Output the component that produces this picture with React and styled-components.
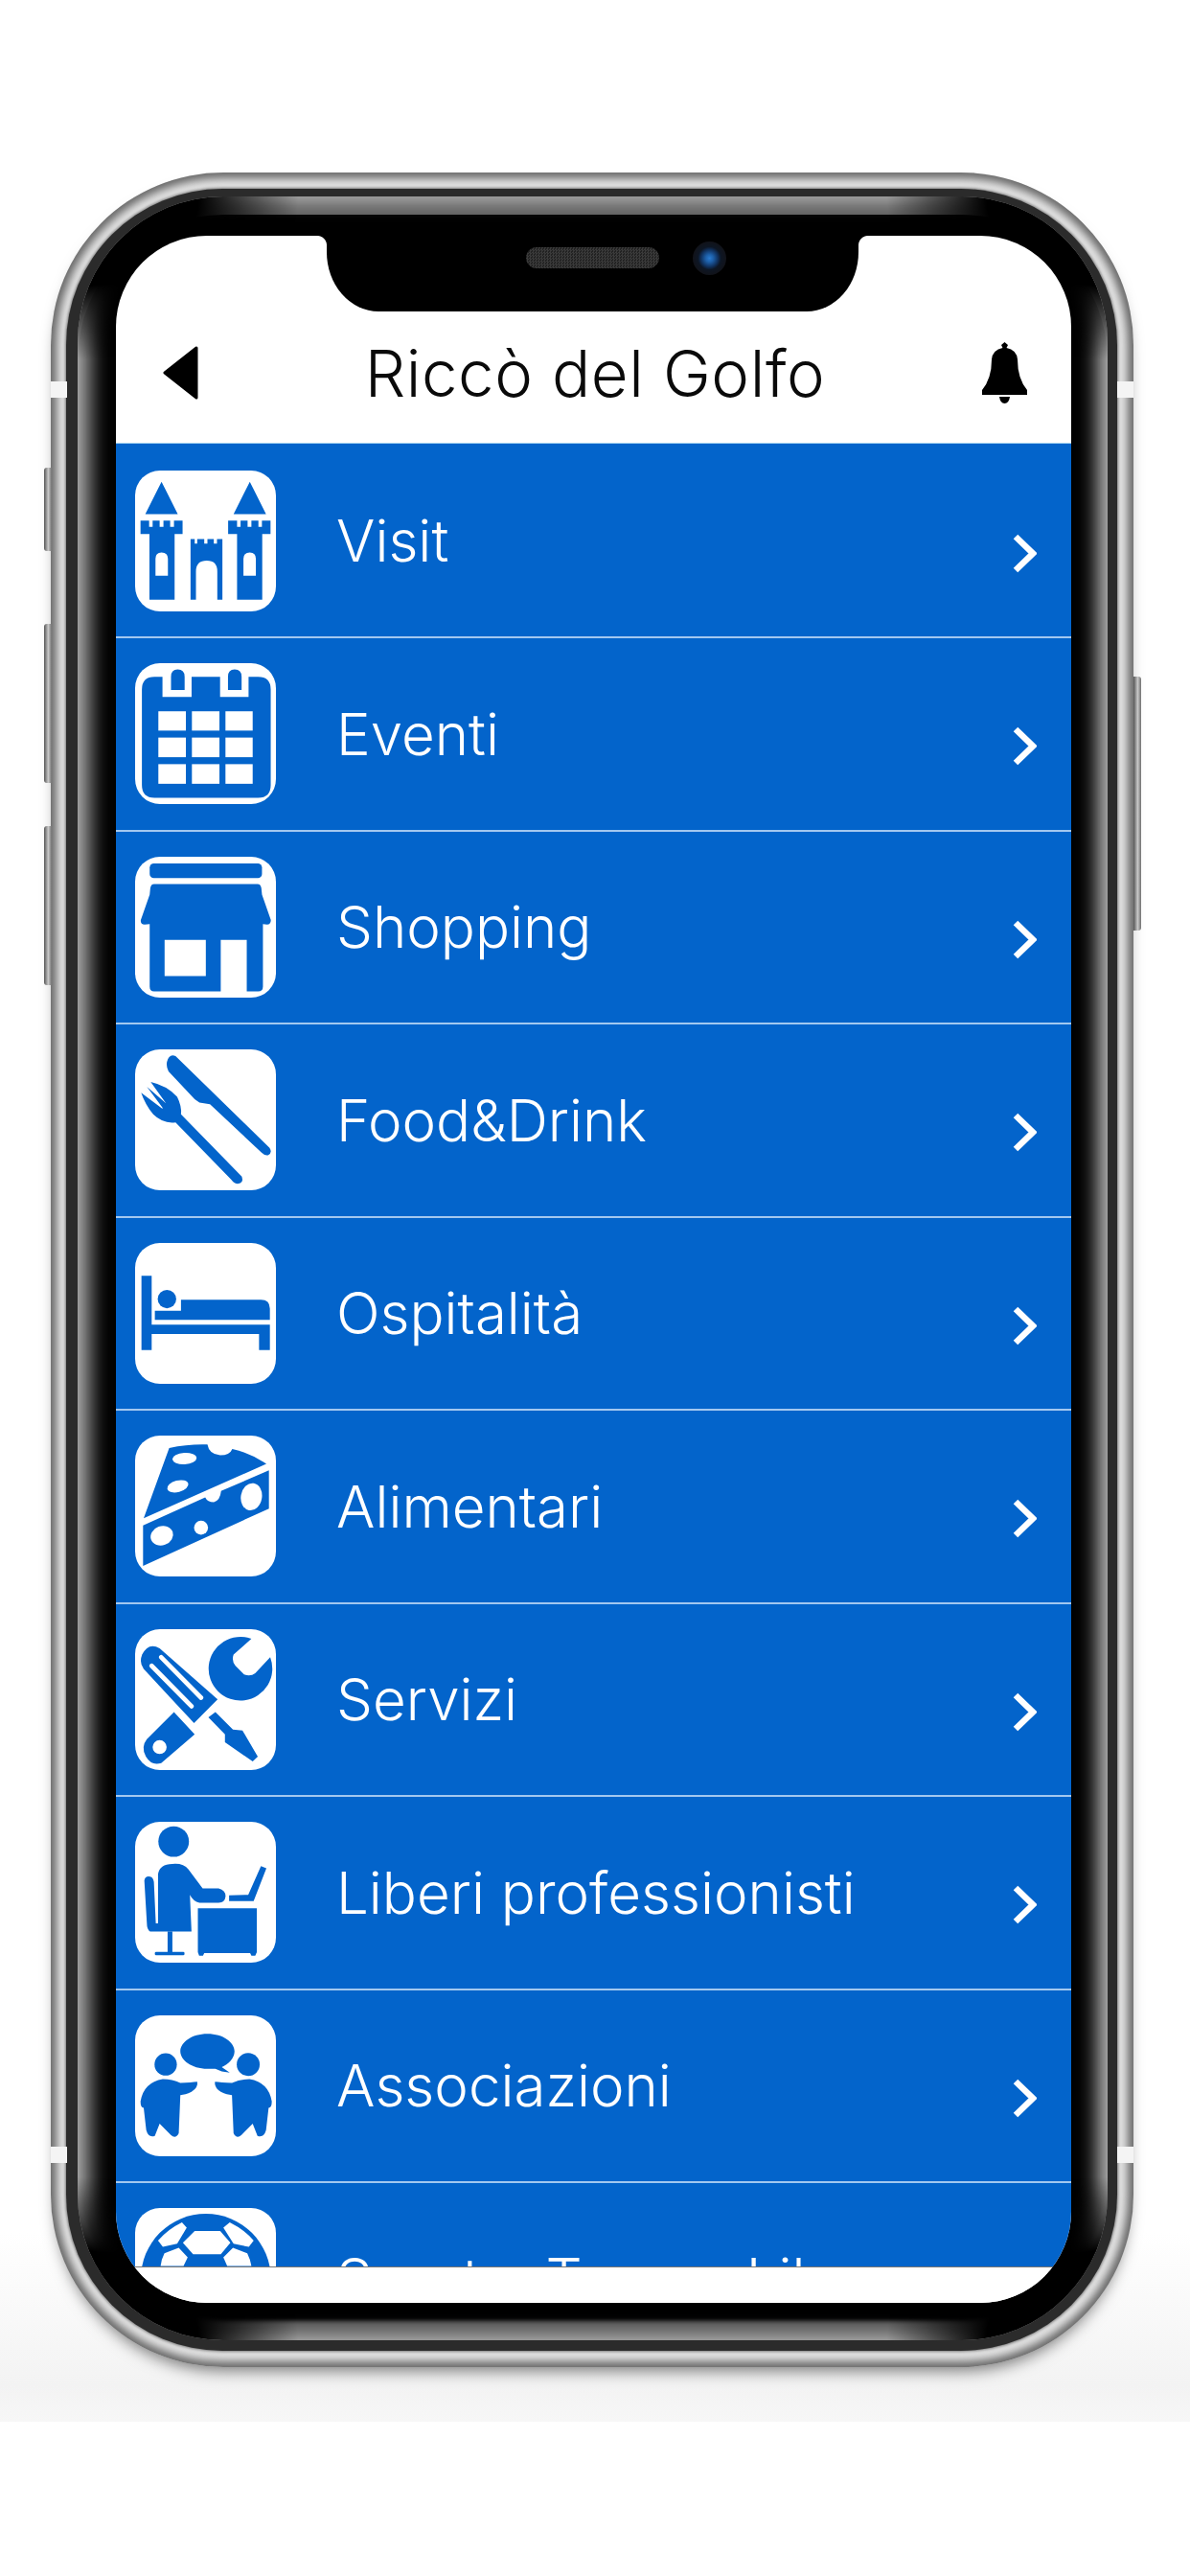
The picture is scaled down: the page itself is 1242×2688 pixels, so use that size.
import React from 'react'
import styled, { createGlobalStyle } from 'styled-components'

const BLUE = '#0364cb'

const GlobalStyle = createGlobalStyle`
  html, body {
    margin: 0;
    background: #fff;
  }
`

const Page = styled.div`
  width: 1242px;
  height: 2688px;
  background: #fff;
`

const Stage = styled.div`
  height: 2527px;
  box-sizing: border-box;
  padding: 180px 0 0 53px;
  overflow: hidden;
  background: linear-gradient(to bottom, #fff 2330px, #f3f3f3 2490px, #f7f7f7 2527px);
`

const Phone = styled.div`
  position: relative;
  width: 1130px;
  height: 2290px;
  box-sizing: border-box;
  padding: 17px 17px 17px 16px;
  border-radius: 180px;
  background: #e2e2e2;
  box-shadow:
    inset 0 0 9px 6px #6a6a6a,
    0 10px 16px -6px rgba(0, 0, 0, 0.5);
`

const SideKey = styled.div`
  position: absolute;
  top: ${p => p.$top}px;
  height: ${p => p.$height}px;
  width: 8px;
  ${p => (p.$right ? 'right: -8px;' : 'left: -7px;')}
  border-radius: ${p => (p.$right ? '0 3px 3px 0' : '3px 0 0 3px')};
  background: linear-gradient(to right, #555, #c9c9c9 55%, #707070);
`

const AntennaBand = styled.div`
  position: absolute;
  top: ${p => p.$top}px;
  ${p => (p.$right ? 'right: 0;' : 'left: 0;')}
  width: 17px;
  height: 17px;
  background: #f4f4f4;
`

const InnerRing = styled.div`
  height: 100%;
  box-sizing: border-box;
  padding: 8px 10px 11px 12px;
  border-radius: 163px;
  background: #2b2b2b;
  box-shadow: 0 0 3px 1px #777;
`

const Bezel = styled.div`
  position: relative;
  height: 100%;
  box-sizing: border-box;
  padding: 41px 38px 39px 40px;
  border-radius: 152px;
  background: #000;
  box-shadow:
    inset 12px 0 22px 0 #b0b0b0,
    inset -11px 0 20px 0 #b0b0b0,
    inset 0 19px 0 0 #626262,
    inset 0 -20px 4px 0 #5a5a5a;

  &::before {
    content: '';
    position: absolute;
    inset: 0;
    border-radius: inherit;
    background:
      radial-gradient(ellipse 230px 170px at 0 0, #000 55%, transparent 100%),
      radial-gradient(ellipse 230px 170px at 100% 0, #000 55%, transparent 100%),
      radial-gradient(ellipse 230px 170px at 0 100%, #000 55%, transparent 100%),
      radial-gradient(ellipse 230px 170px at 100% 100%, #000 55%, transparent 100%);
  }
`

const Screen = styled.div`
  position: relative;
  height: 100%;
  display: flex;
  flex-direction: column;
  border-radius: 95px;
  overflow: hidden;
  background: #fff;
`

const Notch = styled.div`
  position: absolute;
  top: 0;
  left: 220px;
  width: 555px;
  height: 79px;
  box-sizing: border-box;
  display: flex;
  align-items: center;
  padding: 0 0 33px 208px;
  gap: 35px;
  background: #000;
  border-radius: 0 0 54px 54px / 0 0 62px 62px;

  &::before,
  &::after {
    content: '';
    position: absolute;
    top: 0;
    width: 10px;
    height: 10px;
  }

  &::before {
    left: -10px;
    background: radial-gradient(circle at 0 100%, #fff 9.5px, #000 10.5px);
  }

  &::after {
    right: -10px;
    background: radial-gradient(circle at 100% 100%, #fff 9.5px, #000 10.5px);
  }
`

const Speaker = styled.div`
  width: 139px;
  height: 22px;
  border-radius: 11px;
  background: repeating-conic-gradient(#3a3a3a 0 25%, #222 0 50%) 0 0 / 3px 3px;
`

const Camera = styled.div`
  flex: none;
  width: 35px;
  height: 35px;
  border-radius: 50%;
  background: radial-gradient(circle, #2a7bd0 0, #1d5fa8 4px, #10305c 9px, #0d1624 12px, #11131a 17px);
`

const Header = styled.header`
  flex: 0 0 217px;
  box-sizing: border-box;
  display: grid;
  grid-template-columns: 1fr auto 1fr;
  align-items: center;
  padding: 70px 46px 0 49px;
  border-bottom: 1px solid #9fd0f0;
`

const BackIcon = styled.svg`
  display: block;
  width: 37px;
  height: 56px;
`

const Title = styled.h1`
  margin: 0;
  font-family: Inter, 'Liberation Sans', sans-serif;
  font-size: 67px;
  font-weight: 300;
  line-height: 1;
  letter-spacing: 0.6px;
  color: #0a0a0a;
`

const BellIcon = styled.svg`
  display: block;
  width: 47px;
  height: 64px;
  justify-self: end;
`

const List = styled.ul`
  flex: 0 0 1903px;
  margin: 0;
  padding: 1.5px 0 0;
  list-style: none;
  overflow: hidden;
  background: ${BLUE};
  border-bottom: 1px solid #777;
  box-sizing: border-box;
`

const Row = styled.li`
  height: 201.5px;
  box-sizing: border-box;
  display: flex;
  align-items: center;
  padding: 0 36px 0 20px;
  border-bottom: 2px solid #a3c8f0;
`

const Tile = styled.div`
  flex: none;
  width: 147px;
  height: 147px;
  border-radius: 26px;
  background: #fff;

  svg {
    display: block;
    width: 100%;
    height: 100%;
  }
`

const Label = styled.span`
  flex: 1;
  margin-left: 63px;
  font-family: Inter, 'Liberation Sans', sans-serif;
  font-size: 60px;
  font-weight: 300;
  line-height: 1;
  color: #fff;
  white-space: nowrap;
`

const Chevron = styled.svg`
  flex: none;
  display: block;
  width: 26px;
  height: 41px;
  margin-top: 26px;
`

const Footer = styled.div`
  flex: 1;
  background: #fff;
`

const Shape = ({ box, children }) => (
  <svg viewBox={box} fill={BLUE}>
    {children}
  </svg>
)

const CastleIcon = () => (
  <Shape box="63 63 442 442">
    <path d="M146 98L197 200H95ZM423 98L474 200H372Z" />
    <path d="M80 220H107V240H118V220H140V240H152V220H173V240H185V220H212V262H187V468H108V262H80ZM127 393H166V340Q166 320 146 320Q127 320 127 340Z" fillRule="evenodd" />
    <path d="M355 220H383V240H394V220H416V240H428V220H450V240H461V220H488V262H462V468H383V262H355ZM403 393H442V340Q442 320 423 320Q403 320 403 340Z" fillRule="evenodd" />
    <path d="M237 278H250V292H258V278H280V292H290V278H310V292H320V278H337V468H321V380Q321 346 288 346Q254 346 254 380V468H237Z" />
  </Shape>
)

const CalendarIcon = () => (
  <Shape box="63 665 442 445">
    <path d="M123 708H148V772H240V708H330V772H420V708H450Q490 708 490 748V1050Q490 1090 450 1090H123Q83 1090 83 1050V748Q83 708 123 708Z" />
    <path d="M175 750V708Q175 685 196 685Q218 685 218 708V750ZM355 750V708Q355 685 376 685Q398 685 398 708V750Z" />
    <g fill="#fff">
      <rect x="135" y="817" width="87" height="61" />
      <rect x="241" y="817" width="87" height="61" />
      <rect x="347" y="817" width="86" height="61" />
      <rect x="135" y="900" width="87" height="62" />
      <rect x="241" y="900" width="87" height="62" />
      <rect x="347" y="900" width="86" height="62" />
      <rect x="135" y="984" width="87" height="62" />
      <rect x="241" y="984" width="87" height="62" />
      <rect x="347" y="984" width="86" height="62" />
    </g>
  </Shape>
)

const ShopIcon = () => (
  <Shape box="63 71 442 444">
    <rect x="108" y="92" width="354" height="46" rx="13" />
    <path fillRule="evenodd" d="M122 157H448Q458 157 460 170L462 190L490 270Q490 283 478 285L465 283V480Q465 495 450 495H414V333H332V495H122Q108 495 108 480V283L92 285Q78 283 80 270L108 190L110 170Q112 157 122 157ZM155 333V447H285V333Z" />
  </Shape>
)

const CutleryIcon = () => (
  <Shape box="63 676 442 442">
    <path d="M190 697L485 985Q495 1000 480 1008Q470 1010 460 1000L298 848L265 843L250 832L168 745Q160 730 163 715Q170 688 190 697Z" />
    <path d="M190 905Q150 910 120 880Q95 850 82 812L148 862L150 860L100 793L160 845L112 778Q165 790 195 825Q210 855 207 880L398 1075Q405 1095 385 1098Q375 1098 365 1085Z" />
  </Shape>
)

const BedIcon = () => (
  <Shape box="63 82 442 442">
    <path d="M83 185H115V338H486V418H452V368H115V418H83Z" />
    <circle cx="163" cy="258" r="29" />
    <path d="M125 295H207V260H458Q486 260 486 288V323H125Z" />
  </Shape>
)

const CheeseIcon = () => (
  <Shape box="63 686 442 442">
    <path fillRule="evenodd" d="M170 725Q230 712 290 714Q295 745 330 748Q360 748 368 728Q425 740 475 775L90 945Z" />
    <path fillRule="evenodd" d="M88 968L283 880Q290 895 310 895Q330 890 333 860L483 795V915L88 1095Z" />
    <g fill="#fff">
      <ellipse cx="218" cy="758" rx="38" ry="18" transform="rotate(-3 218 758)" />
      <ellipse cx="197" cy="845" rx="34" ry="18" transform="rotate(-15 197 845)" />
      <ellipse cx="428" cy="878" rx="33" ry="43" transform="rotate(10 428 878)" />
      <ellipse cx="147" cy="1000" rx="36" ry="30" transform="rotate(-20 147 1000)" />
      <circle cx="270" cy="975" r="22" />
    </g>
  </Shape>
)

const ToolsIcon = () => (
  <Shape box="63 90 442 442">
    <path d="M85 170Q105 130 140 150L322 310L248 385L90 215Q75 195 85 170Z" />
    <path d="M145 178L270 305M115 205L240 332" stroke="#fff" strokeWidth="14" strokeLinecap="round" />
    <path d="M293 367L315 350L370 405L400 408L448 490L432 505L345 445L345 420Z" />
    <path d="M428 120A100 100 0 1 0 487 178L440 228Q425 240 405 232L378 205Q365 190 372 170Z" />
    <path fillRule="evenodd" d="M185 350L250 420L145 510Q115 520 97 490Q80 460 100 435ZM140 438A22 22 0 1 0 140 482A22 22 0 1 0 140 438Z" />
  </Shape>
)

const ProfessionalIcon = () => (
  <Shape box="63 696 442 442">
    <circle cx="184" cy="758" r="48" />
    <path d="M135 860Q140 828 180 828Q215 825 230 845L275 905H325Q347 910 347 930Q345 950 325 950H265Q245 945 235 925L240 1040H110Q100 1035 100 1015L92 880Q95 865 110 868Q120 870 122 885L128 1015H135Z" />
    <rect x="165" y="1040" width="15" height="65" />
    <rect x="125" y="1104" width="93" height="11" rx="4" />
    <path d="M260 967H445V1105L440 1116H428L424 1108H280L276 1116H264L260 1105Z" />
    <path d="M358 927L418 925L458 835L475 842L435 945H358Z" />
  </Shape>
)

const PERSON = 'M80 370Q90 310 150 300Q180 300 205 312Q240 310 258 308Q262 325 240 340Q220 350 205 350L200 470Q190 490 175 475L140 440L125 478Q105 485 98 460L90 390Q80 390 80 370Z'

const AssociationIcon = () => (
  <Shape box="63 100 442 442">
    <path d="M290 158C340 158 375 185 375 213C375 235 355 255 335 262L360 280L335 276L315 268H290C240 268 205 240 205 213C205 185 240 158 290 158Z" />
    <circle cx="159" cy="254" r="35" />
    <circle cx="418" cy="254" r="36" />
    <path d={PERSON} />
    <path d={PERSON} transform="matrix(-1 0 0 1 572 0)" />
  </Shape>
)

const BallIcon = () => (
  <Shape box="63 703 442 442">
    <circle cx="285" cy="925" r="204" />
    <g fill="#fff">
      <path d="M213 812L250 775H330L362 812L332 848H245Z" />
      <path d="M135 805Q165 770 210 748L225 765L195 815L150 825Z" />
      <path d="M435 805Q405 770 360 748L340 765L372 815L420 825Z" />
      <path d="M143 885Q145 865 155 845L200 828L228 858L215 885Z" />
      <path d="M428 885Q425 865 415 845L370 828L340 858L352 885Z" />
    </g>
  </Shape>
)

const items = [
  { label: 'Visit', Icon: CastleIcon },
  { label: 'Eventi', Icon: CalendarIcon },
  { label: 'Shopping', Icon: ShopIcon },
  { label: 'Food&Drink', Icon: CutleryIcon },
  { label: 'Ospitalità', Icon: BedIcon },
  { label: 'Alimentari', Icon: CheeseIcon },
  { label: 'Servizi', Icon: ToolsIcon },
  { label: 'Liberi professionisti', Icon: ProfessionalIcon },
  { label: 'Associazioni', Icon: AssociationIcon },
  { label: 'Sport e Tempo Libero', Icon: BallIcon }
]

const App = () => (
  <Page>
    <GlobalStyle />
    <Stage>
      <Phone>
        <SideKey $top={308} $height={87} />
        <SideKey $top={471} $height={166} />
        <SideKey $top={682} $height={166} />
        <SideKey $right $top={526} $height={265} />
        <AntennaBand $top={218} />
        <AntennaBand $top={2060} />
        <AntennaBand $right $top={218} />
        <AntennaBand $right $top={2060} />
        <InnerRing>
          <Bezel>
            <Screen>
              <Notch>
                <Speaker />
                <Camera />
              </Notch>
              <Header>
                <BackIcon viewBox="0 0 37 56">
                  <path d="M35 2L2 28L35 54Z" fill="#000" stroke="#000" strokeWidth="3" strokeLinejoin="round" />
                </BackIcon>
                <Title>Riccò del Golfo</Title>
                <BellIcon viewBox="0 0 47 64">
                  <path d="M23.5 0L27 3L25.5 6Q36 8 37 18Q37 38 47 50V55H0V50Q10 38 10 18Q11 8 21.5 6L20 3Z" />
                  <path d="M18 57H29Q28 64 23.5 64Q19 64 18 57Z" />
                </BellIcon>
              </Header>
              <List>
                {items.map(({ label, Icon }) => (
                  <Row key={label}>
                    <Tile>
                      <Icon />
                    </Tile>
                    <Label>{label}</Label>
                    <Chevron viewBox="0 0 26 41">
                      <path d="M4 3L22 20.5L4 38" fill="none" stroke="#fff" strokeWidth="6.5" />
                    </Chevron>
                  </Row>
                ))}
              </List>
              <Footer />
            </Screen>
          </Bezel>
        </InnerRing>
      </Phone>
    </Stage>
  </Page>
)

export default App
